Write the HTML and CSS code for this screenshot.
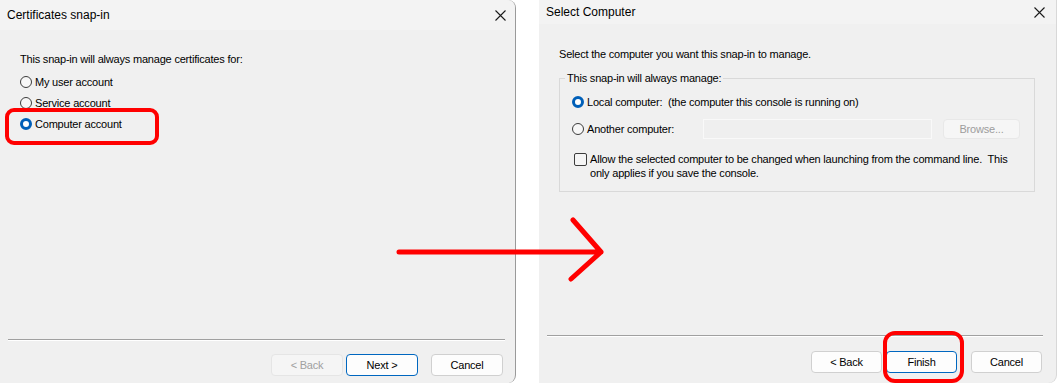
FILE: index.html
```html
<!DOCTYPE html>
<html lang="en">
<head>
    <meta charset="UTF-8">
    <title>Certificates snap-in</title>
    <link rel="stylesheet" href="styles.css">
</head>
<body>
    <div class="screen">
        <div class="dialog dialog-left">
            <div class="titlebar">
                <span class="title">Certificates snap-in</span>
                <svg class="close" width="11" height="11" viewBox="0 0 11 11"><path d="M0.5 0.5 L10.5 10.5 M10.5 0.5 L0.5 10.5" stroke="#1a1a1a" stroke-width="1.1" fill="none"/></svg>
            </div>
            <div class="body body-left">
                <p class="intro">This snap-in will always manage certificates for:</p>
                <label class="radio-row"><span class="radio"></span>My user account</label>
                <label class="radio-row"><span class="radio"></span>Service account</label>
                <label class="radio-row"><span class="radio checked"></span>Computer account</label>
            </div>
            <div class="footer footer-left">
                <hr class="sep">
                <div class="buttons">
                    <button class="btn disabled">&lt; Back</button>
                    <button class="btn default">Next &gt;</button>
                    <button class="btn cancel">Cancel</button>
                </div>
            </div>
            <div class="mark mark-account"></div>
        </div>

        <div class="dialog dialog-right">
            <div class="titlebar titlebar-right">
                <span class="title">Select Computer</span>
                <svg class="close" width="11" height="11" viewBox="0 0 11 11"><path d="M0.5 0.5 L10.5 10.5 M10.5 0.5 L0.5 10.5" stroke="#1a1a1a" stroke-width="1.1" fill="none"/></svg>
            </div>
            <div class="body body-right">
                <p class="intro">Select the computer you want this snap-in to manage.</p>
                <fieldset class="group">
                    <legend>This snap-in will always manage:</legend>
                    <label class="radio-row local"><span class="radio checked"></span>Local computer:&nbsp; (the computer this console is running on)</label>
                    <div class="another">
                        <label class="radio-row"><span class="radio"></span>Another computer:</label>
                        <span class="textbox"></span>
                        <button class="btn browse">Browse...</button>
                    </div>
                    <label class="check-row"><span class="checkbox"></span><span>Allow the selected computer to be changed when launching from the command line.&nbsp; This<br>only applies if you save the console.</span></label>
                </fieldset>
            </div>
            <div class="footer footer-right">
                <hr class="sep">
                <div class="buttons">
                    <button class="btn">&lt; Back</button>
                    <button class="btn default">Finish</button>
                    <button class="btn cancel">Cancel</button>
                </div>
            </div>
            <div class="mark mark-finish"></div>
        </div>

        <svg class="arrow" width="220" height="70" viewBox="0 0 220 70">
            <path d="M3 36 L205 36 M177 4 L205 36 L175 63" stroke="#ff0000" stroke-width="5" stroke-linecap="round" stroke-linejoin="round" fill="none"/>
        </svg>
    </div>
</body>
</html>
```

FILE: styles.css
```css
body {
    margin: 0;
    background: #ffffff;
    font-family: 'Liberation Sans', Arial, sans-serif;
    color: #000000;
}

.screen {
    position: relative;
    display: flex;
    gap: 23px;
    width: 1057px;
    height: 384px;
    overflow: hidden;
}

.dialog {
    position: relative;
    display: flex;
    flex-direction: column;
    background: #f0f0f0;
    height: 383px;
}

.dialog-left {
    width: 515px;
    border-right: 1px solid #9a9a9a;
    border-radius: 0 8px 8px 0;
}

.dialog-right {
    width: 517px;
    border-radius: 0 0 8px 0;
    box-shadow: 1px 0 0 #d8d8d8;
}

.titlebar {
    display: flex;
    align-items: center;
    justify-content: space-between;
    height: 30px;
    padding: 0 9px 0 7px;
    background: #f3f3f3;
    font-size: 12px;
    border-radius: 0 8px 0 0;
}

.titlebar-right {
    height: 24px;
    padding: 0 11px 0 7px;
    border-radius: 0;
}

.close {
    display: block;
}

.body {
    flex: 1;
    font-size: 11px;
    letter-spacing: -0.2px;
    line-height: 14px;
}

.body-left {
    padding: 22px 0 0 20px;
}

.body-right {
    padding: 23px 0 0 20px;
}

.intro {
    margin: 0;
}

.radio-row {
    display: flex;
    align-items: center;
    gap: 3px;
    height: 21px;
}

.body-left .intro {
    margin-bottom: 5px;
}

.radio {
    box-sizing: border-box;
    width: 12px;
    height: 12px;
    border: 1px solid #3c3c3c;
    border-radius: 50%;
    background: #f7f7f7;
}

.radio.checked {
    border: 3.5px solid #005fb8;
    background: #ffffff;
}

.group {
    width: 476px;
    box-sizing: border-box;
    height: 121px;
    margin: 10px 0 0 0;
    padding: 6px 0 0 12px;
    border: 1px solid #d9d9d9;
}

.group legend {
    margin-left: -7px;
    padding: 0 2px;
}

.local {
    height: 20px;
    margin-top: 1px;
}

.another {
    display: flex;
    align-items: center;
    height: 24px;
    margin-top: 5px;
}

.another .radio-row {
    width: 131px;
}

.textbox {
    box-sizing: border-box;
    width: 229px;
    height: 20px;
    border: 1px solid #f9f9f9;
    background: #efefef;
}

.btn.browse {
    width: 77px;
    height: 20px;
    margin-left: 11px;
    background: #f6f6f6;
    border-color: #e8e8e8;
    color: #9d9d9d;
}

.check-row {
    display: flex;
    gap: 3px;
    margin-top: 11px;
    margin-left: 2px;
}

.checkbox {
    box-sizing: border-box;
    flex: none;
    width: 13px;
    height: 13px;
    margin-top: 1px;
    border: 1px solid #3c3c3c;
    border-radius: 2px;
    background: #f5f5f5;
}

.footer {
    display: flex;
    flex-direction: column;
}

.sep {
    margin: 0;
    height: 0;
    border: none;
    border-top: 1px solid #a0a0a0;
    border-bottom: 1px solid #ffffff;
}

.footer-left .sep {
    margin: 0 10px 0 8px;
}

.footer-right .sep {
    margin: 0 13px 0 8px;
}

.buttons {
    display: flex;
    justify-content: flex-end;
}

.footer-left .buttons {
    margin-top: 13px;
    padding: 0 12px 7px 0;
    gap: 3px;
}

.footer-right .buttons {
    margin-top: 14px;
    padding: 0 14px 10px 0;
    gap: 4px;
}

.btn {
    box-sizing: border-box;
    width: 72px;
    height: 22px;
    padding: 0;
    border: 1px solid #d0d0d0;
    border-radius: 4px;
    background: #fdfdfd;
    font-family: 'Liberation Sans', Arial, sans-serif;
    font-size: 11px;
    letter-spacing: -0.2px;
    color: #000000;
}

.footer-right .btn {
    width: 71px;
}

.btn.default {
    border-color: #0067c0;
}

.btn.disabled {
    background: #f5f5f5;
    border-color: #e5e5e5;
    color: #a0a0a0;
}

.btn.cancel {
    margin-left: 10px;
}

.mark {
    position: absolute;
    box-sizing: border-box;
    border: 4px solid #ff0000;
}

.mark-account {
    left: 5px;
    top: 108px;
    width: 154px;
    height: 37px;
    border-radius: 9px;
}

.mark-finish {
    left: 344px;
    top: 331px;
    width: 81px;
    height: 52px;
    border-radius: 12px;
}

.arrow {
    position: absolute;
    left: 396px;
    top: 216px;
}
```
